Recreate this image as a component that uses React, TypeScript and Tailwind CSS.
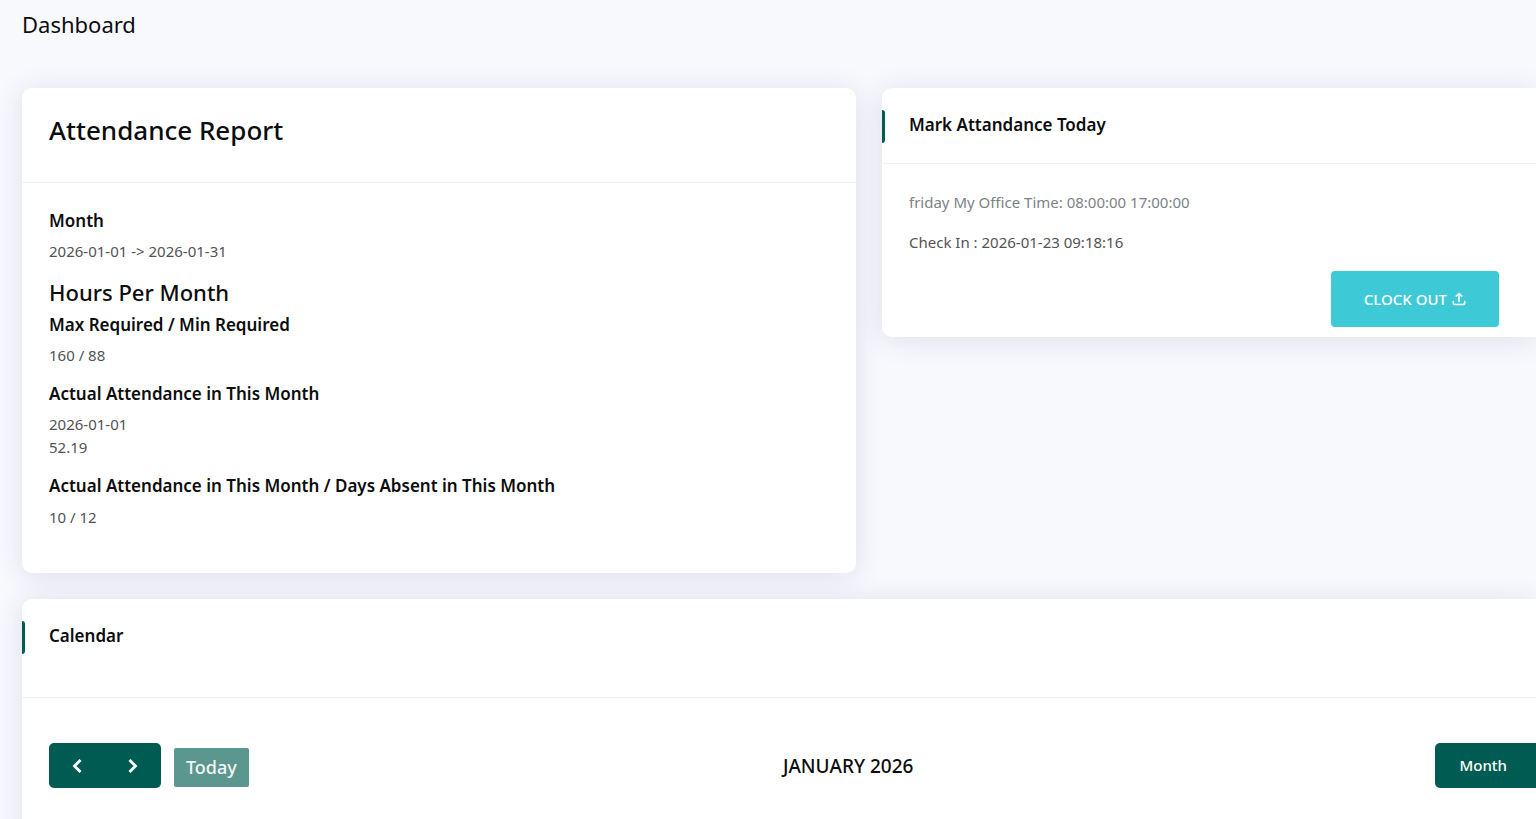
function AccentBar() {
    return <span className="h-[33px] w-[3px] shrink-0 rounded-r-sm bg-[#005c53]" />
}

function AttendanceReport() {
    return (
        <section className="rounded-[10px] bg-white shadow-[0_3px_28px_rgba(50,50,105,0.13)]">
            <div className="border-b border-[#f1f1f2] px-[27px] pt-[23px] pb-[33px]">
                <h2 className="text-[26px] leading-[38px] font-medium">Attendance Report</h2>
            </div>
            <div className="px-[27px] pt-[26px] pb-7">
                <h5 className="mb-[7px] text-[17px] leading-6 font-semibold">Month</h5>
                <p className="mb-[15px] text-[15px] leading-[23px] text-[#525355]">2026-01-01 -&gt; 2026-01-31</p>
                <h3 className="mb-[7px] text-[22px] leading-7 font-medium">Hours Per Month</h3>
                <h5 className="mb-[7px] text-[17px] leading-6 font-semibold">Max Required / Min Required</h5>
                <p className="mb-[15px] text-[15px] leading-[23px] text-[#525355]">160 / 88</p>
                <h5 className="mb-[7px] text-[17px] leading-6 font-semibold">Actual Attendance in This Month</h5>
                <p className="mb-[15px] text-[15px] leading-[23px] text-[#525355]">
                    2026-01-01
                    <br />
                    52.19
                </p>
                <h5 className="mb-2 text-[17px] leading-6 font-semibold">Actual Attendance in This Month / Days Absent in This Month</h5>
                <p className="mb-4 text-[15px] leading-[23px] text-[#525355]">10 / 12</p>
            </div>
        </section>
    )
}

function MarkAttendance() {
    return (
        <section className="rounded-l-[10px] bg-white shadow-[0_3px_28px_rgba(50,50,105,0.13)]">
            <div className="flex items-start gap-6 border-b border-[#f1f1f2] pt-[22px] pb-5">
                <AccentBar />
                <h5 className="text-[17px] leading-[30px] font-semibold">Mark Attandance Today</h5>
            </div>
            <div className="px-[27px] pt-[27px] pb-[10px]">
                <p className="mb-[17px] text-[15px] leading-[23px] text-[#7b8388]">friday My Office Time: 08:00:00 17:00:00</p>
                <p className="mb-[17px] text-[15px] leading-[23px] text-[#525355]">Check In : 2026-01-23 09:18:16</p>
                <div className="flex justify-end pr-[10px]">
                    <button type="button" className="flex h-14 items-center gap-[5px] rounded-[4px] bg-[#3ec9d6] px-[33px] text-[15px] font-medium text-white">
                        <span>CLOCK OUT</span>
                        <svg viewBox="0 0 14 14" className="h-[14px] w-[14px]" fill="none" stroke="currentColor" strokeWidth="1.6" strokeLinecap="round" strokeLinejoin="round">
                            <path d="M7 9.5V1.7M4.2 4.2 7 1.5l2.8 2.7M1.3 9.5v1.3A1.7 1.7 0 0 0 3 12.5h8a1.7 1.7 0 0 0 1.7-1.7V9.5" />
                        </svg>
                    </button>
                </div>
            </div>
        </section>
    )
}

function Calendar() {
    return (
        <section className="rounded-tl-[10px] bg-white shadow-[0_3px_28px_rgba(50,50,105,0.13)]">
            <div className="flex items-start gap-6 border-b border-[#f1f1f2] pt-[22px] pb-[43px]">
                <AccentBar />
                <h5 className="text-[17px] leading-[30px] font-semibold">Calendar</h5>
            </div>
            <div className="flex items-center justify-between pt-[45px] pb-14 pl-[27px]">
                <div className="flex items-center gap-[13px] pr-3">
                    <div className="flex overflow-hidden rounded-[5px] bg-[#005c53] text-white">
                        <button type="button" aria-label="Previous month" className="flex h-[45px] w-14 items-center justify-center">
                            <svg viewBox="0 0 16 16" className="h-4 w-4" fill="none" stroke="currentColor" strokeWidth="2.8">
                                <path d="M11.5 2 5.5 8l6 6" />
                            </svg>
                        </button>
                        <button type="button" aria-label="Next month" className="flex h-[45px] w-14 items-center justify-center">
                            <svg viewBox="0 0 16 16" className="h-4 w-4" fill="none" stroke="currentColor" strokeWidth="2.8">
                                <path d="m4.5 2 6 6-6 6" />
                            </svg>
                        </button>
                    </div>
                    <button type="button" disabled className="mt-[3px] h-[39px] rounded-[2px] bg-[#5b968f] px-3 text-lg font-medium text-[#f0f7f6]">
                        Today
                    </button>
                </div>
                <h2 className="pt-[2px] text-[19px] font-medium">JANUARY 2026</h2>
                <button type="button" className="h-[45px] rounded-l-[5px] bg-[#005c53] pr-[29px] pl-6 text-[15px] font-medium text-white">
                    Month
                </button>
            </div>
        </section>
    )
}

export default function App() {
    return (
        <main className="h-screen overflow-hidden bg-[#f8f9fd] pl-[22px] font-['Noto_Sans','Open_Sans',sans-serif] text-[#0c0d0e]">
            <h1 className="pt-[9px] pb-[49px] text-[22px] leading-[30px]">Dashboard</h1>
            <div className="mb-[26px] grid grid-cols-[834fr_654fr] items-start gap-[26px]">
                <AttendanceReport />
                <MarkAttendance />
            </div>
            <Calendar />
        </main>
    )
}
